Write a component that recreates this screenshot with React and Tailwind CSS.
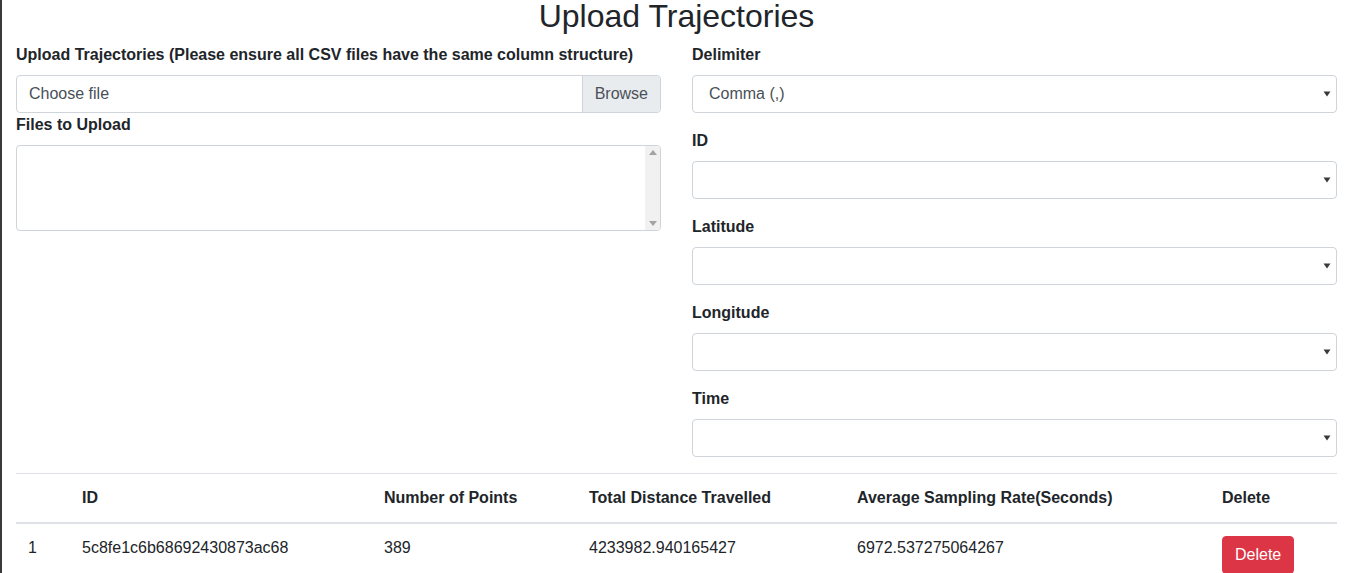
import React from "react";

const font = { fontFamily: '"Liberation Sans", Arial, Helvetica, sans-serif' };

function Arrow() {
  return (
    <svg
      className="absolute right-[6px] top-1/2 -translate-y-1/2 pointer-events-none"
      width="8"
      height="6"
      viewBox="0 0 8 6"
    >
      <path d="M0.5 0.5 L7.5 0.5 L4 5.5 Z" fill="#3a3a3a" />
    </svg>
  );
}

function SelectGroup({ label, value }) {
  return (
    <div className="mb-4">
      <label className="block text-[16px] leading-6 font-bold text-[#212529] mb-2">{label}</label>
      <div className="relative">
        <select
          className="block w-full h-[38px] appearance-none bg-white border border-[#ced4da] rounded-[4px] pl-[16px] pr-6 text-[16px] text-[#495057] outline-none"
          style={font}
          defaultValue={value || ""}
        >
          {value ? <option value={value}>{value}</option> : <option value=""></option>}
        </select>
        <Arrow />
      </div>
    </div>
  );
}

export default function App() {
  return (
    <div
      className="w-[1348px] h-[573px] overflow-hidden bg-white border-l-2 border-[#3a3a3a] pl-[14px] pr-[11px] text-[#212529]"
      style={font}
    >
      <h2 className="text-center text-[32px] leading-[32px] font-normal mb-[11px] text-[#212529]">
        Upload Trajectories
      </h2>
      <div className="grid grid-cols-2 gap-x-[31px]">
        <div>
          <label className="block text-[16px] leading-6 font-bold mb-2">
            Upload Trajectories (Please ensure all CSV files have the same column structure)
          </label>
          <div className="flex h-[38px] border border-[#ced4da] rounded-[4px] overflow-hidden">
            <div className="flex-1 flex items-center pl-3 text-[16px] text-[#495057]">Choose file</div>
            <div className="flex items-center px-3 bg-[#e9ecef] border-l border-[#ced4da] text-[16px] text-[#495057]">
              Browse
            </div>
          </div>
          <label className="block text-[16px] leading-6 font-bold mb-2">Files to Upload</label>
          <div className="relative h-[86px]">
            <textarea
              className="block w-full h-[86px] border border-[#ced4da] rounded-[4px] pl-3 pr-[28px] py-[6px] text-[16px] text-[#495057] overflow-hidden resize-none outline-none"
              style={font}
              defaultValue=""
            />
            <div className="absolute top-px bottom-px right-px w-[15px] bg-[#f1f1f1] rounded-r-[3px] flex flex-col items-center justify-between py-[4px] pointer-events-none">
              <svg width="8" height="5" viewBox="0 0 8 5">
                <path d="M0 5 L8 5 L4 0 Z" fill="#a3a3a3" />
              </svg>
              <svg width="8" height="5" viewBox="0 0 8 5">
                <path d="M0 0 L8 0 L4 5 Z" fill="#a3a3a3" />
              </svg>
            </div>
          </div>
        </div>
        <div>
          <SelectGroup label="Delimiter" value="Comma (,)" />
          <SelectGroup label="ID" />
          <SelectGroup label="Latitude" />
          <SelectGroup label="Longitude" />
          <SelectGroup label="Time" />
        </div>
      </div>
      <table className="w-full table-fixed border-collapse text-[16px] text-[#212529]">
        <colgroup>
          <col className="w-[54px]" />
          <col className="w-[302px]" />
          <col className="w-[205px]" />
          <col className="w-[268px]" />
          <col className="w-[365px]" />
          <col />
        </colgroup>
        <thead>
          <tr>
            <th className="p-3 leading-6 text-left align-bottom font-bold border-t border-b-2 border-[#dee2e6]"></th>
            <th className="p-3 leading-6 text-left align-bottom font-bold border-t border-b-2 border-[#dee2e6]">ID</th>
            <th className="p-3 leading-6 text-left align-bottom font-bold border-t border-b-2 border-[#dee2e6]">Number of Points</th>
            <th className="p-3 leading-6 text-left align-bottom font-bold border-t border-b-2 border-[#dee2e6]">Total Distance Travelled</th>
            <th className="p-3 leading-6 text-left align-bottom font-bold border-t border-b-2 border-[#dee2e6]">Average Sampling Rate(Seconds)</th>
            <th className="p-3 leading-6 text-left align-bottom font-bold border-t border-b-2 border-[#dee2e6]">Delete</th>
          </tr>
        </thead>
        <tbody>
          <tr>
            <td className="p-3 leading-6 align-top">1</td>
            <td className="p-3 leading-6 align-top">5c8fe1c6b68692430873ac68</td>
            <td className="p-3 leading-6 align-top">389</td>
            <td className="p-3 leading-6 align-top">4233982.940165427</td>
            <td className="p-3 leading-6 align-top">6972.537275064267</td>
            <td className="p-3 leading-6 align-top">
              <button className="bg-[#dc3545] border border-[#dc3545] text-white text-[16px] leading-6 px-3 py-[6px] rounded-[4px]">
                Delete
              </button>
            </td>
          </tr>
        </tbody>
      </table>
    </div>
  );
}
